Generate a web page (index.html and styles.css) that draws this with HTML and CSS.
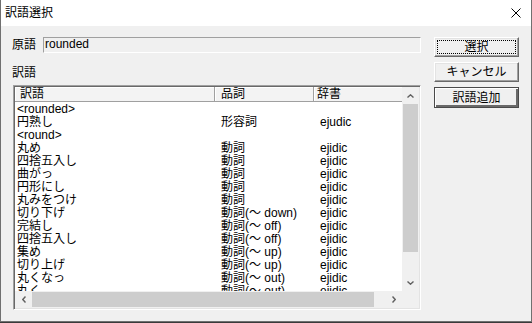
FILE: index.html
```html
<!DOCTYPE html>
<html>
<head>
    <meta charset="utf-8">
    <link rel="stylesheet" href="styles.css">
</head>
<body>
    <div class="window">
        <div class="titlebar">
            <span class="title">訳語選択</span>
            <svg class="close" width="10" height="10" viewBox="0 0 10 10">
                <path d="M0.5 0.5 L9.5 9.5 M9.5 0.5 L0.5 9.5" stroke="#000" stroke-width="1" fill="none"/>
            </svg>
        </div>

        <div class="dialog">
            <div class="main">
                <div class="src-row">
                    <span class="src-label">原語</span>
                    <div class="src-field">rounded</div>
                </div>

                <div class="list-label">訳語</div>

                <div class="list">
                    <div class="view">
                        <div class="header">
                            <div class="hcell c1">訳語</div>
                            <div class="hcell c2">品詞</div>
                            <div class="hcell c3">辞書</div>
                        </div>
                        <div class="rows">
                            <div class="row"><span class="c1">&lt;rounded&gt;</span><span class="c2"></span><span class="c3"></span></div>
                            <div class="row"><span class="c1">円熟し</span><span class="c2">形容詞</span><span class="c3">ejudic</span></div>
                            <div class="row"><span class="c1">&lt;round&gt;</span><span class="c2"></span><span class="c3"></span></div>
                            <div class="row"><span class="c1">丸め</span><span class="c2">動詞</span><span class="c3">ejidic</span></div>
                            <div class="row"><span class="c1">四捨五入し</span><span class="c2">動詞</span><span class="c3">ejidic</span></div>
                            <div class="row"><span class="c1">曲がっ</span><span class="c2">動詞</span><span class="c3">ejidic</span></div>
                            <div class="row"><span class="c1">円形にし</span><span class="c2">動詞</span><span class="c3">ejidic</span></div>
                            <div class="row"><span class="c1">丸みをつけ</span><span class="c2">動詞</span><span class="c3">ejidic</span></div>
                            <div class="row"><span class="c1">切り下げ</span><span class="c2">動詞(～ down)</span><span class="c3">ejidic</span></div>
                            <div class="row"><span class="c1">完結し</span><span class="c2">動詞(～ off)</span><span class="c3">ejidic</span></div>
                            <div class="row"><span class="c1">四捨五入し</span><span class="c2">動詞(～ off)</span><span class="c3">ejidic</span></div>
                            <div class="row"><span class="c1">集め</span><span class="c2">動詞(～ up)</span><span class="c3">ejidic</span></div>
                            <div class="row"><span class="c1">切り上げ</span><span class="c2">動詞(～ up)</span><span class="c3">ejidic</span></div>
                            <div class="row"><span class="c1">丸くなっ</span><span class="c2">動詞(～ out)</span><span class="c3">ejidic</span></div>
                            <div class="row"><span class="c1">丸く</span><span class="c2">動詞(～ out)</span><span class="c3">ejidic</span></div>
                        </div>
                    </div>

                    <div class="vscroll">
                        <div class="arrow">
                            <svg width="7" height="4" viewBox="0 0 7 4"><path d="M0.5 3.5 L3.5 0.8 L6.5 3.5" stroke="#606060" stroke-width="1.4" fill="none"/></svg>
                        </div>
                        <div class="vtrack"><div class="vthumb"></div></div>
                        <div class="arrow">
                            <svg width="7" height="4" viewBox="0 0 7 4"><path d="M0.5 0.5 L3.5 3.2 L6.5 0.5" stroke="#606060" stroke-width="1.4" fill="none"/></svg>
                        </div>
                    </div>

                    <div class="hscroll">
                        <div class="arrow">
                            <svg width="4" height="7" viewBox="0 0 4 7"><path d="M3.5 0.5 L0.8 3.5 L3.5 6.5" stroke="#606060" stroke-width="1.4" fill="none"/></svg>
                        </div>
                        <div class="htrack"><div class="hthumb"></div></div>
                        <div class="arrow">
                            <svg width="4" height="7" viewBox="0 0 4 7"><path d="M0.5 0.5 L3.2 3.5 L0.5 6.5" stroke="#606060" stroke-width="1.4" fill="none"/></svg>
                        </div>
                    </div>

                    <div class="corner"></div>
                </div>
            </div>

            <div class="buttons">
                <button class="btn focused"><span>選択</span></button>
                <button class="btn">キャンセル</button>
                <button class="btn default">訳語追加</button>
            </div>
        </div>
    </div>
</body>
</html>
```

FILE: styles.css
```css
body {
    margin: 0;
    padding: 0;
    background: #3a3a3a;
    font-family: "Liberation Sans", "Noto Sans CJK JP", sans-serif;
    font-size: 12px;
    color: #000;
    overflow: hidden;
}

.window {
    width: 532px;
    height: 322px;
    box-sizing: border-box;
    border: 1px solid #707070;
    border-top: none;
    background: #f0f0f0;
    display: flex;
    flex-direction: column;
}

.titlebar {
    height: 26px;
    background: #fff;
    display: flex;
    align-items: center;
    justify-content: space-between;
    padding: 0 10px 0 4px;
}

.title {
    font-size: 12px;
    line-height: 14px;
}

.close {
    display: block;
    margin-top: -1px;
}

.dialog {
    flex: 1;
    display: flex;
    padding: 11px 0 0 11px;
}

.main {
    width: 409px;
    display: flex;
    flex-direction: column;
}

.src-row {
    display: flex;
    align-items: center;
    height: 16px;
}

.src-label {
    width: 31px;
    line-height: 14px;
}

.src-field {
    flex: 1;
    height: 16px;
    box-sizing: border-box;
    border: 1px solid;
    border-color: #a0a0a0 #fff #fff #a0a0a0;
    padding-left: 1px;
    line-height: 13px;
}

.list-label {
    margin-top: 13px;
    line-height: 14px;
    height: 14px;
}

.list {
    margin: 5px 0 0 1px;
    width: 408px;
    height: 225px;
    box-sizing: border-box;
    border: 1px solid;
    border-color: #a0a0a0 #fff #fff #a0a0a0;
    box-shadow: inset 1px 1px 0 #696969, inset -1px -1px 0 #e3e3e3;
    padding: 1px;
    display: grid;
    grid-template-columns: 1fr 17px;
    grid-template-rows: 1fr 17px;
}

.view {
    background: #fff;
    overflow: hidden;
}

.header {
    display: flex;
    height: 15px;
    background: #f3f3f3;
}

.hcell {
    box-sizing: border-box;
    height: 15px;
    line-height: 14px;
    border-right: 1px solid #a0a0a0;
    box-shadow: inset 1px 1px 0 #fff;
    border-bottom: 1px solid #a0a0a0;
    white-space: nowrap;
}

.hcell.c1 { width: 200px; padding-left: 5px; }
.hcell.c2 { width: 99px; padding-left: 6px; }
.hcell.c3 { width: 88px; padding-left: 3px; border-right: none; }

.rows {
    padding-top: 1px;
}

.row {
    display: flex;
    height: 13px;
    line-height: 13px;
    white-space: nowrap;
}

.row .c1 { width: 200px; padding-left: 2px; box-sizing: border-box; }
.row .c2 { width: 99px; padding-left: 6px; box-sizing: border-box; }
.row .c3 { padding-left: 6px; }

.vscroll {
    background: #f0f0f0;
    display: flex;
    flex-direction: column;
}

.vscroll .arrow {
    height: 17px;
    display: flex;
    align-items: center;
    justify-content: center;
}

.vtrack {
    flex: 1;
    padding: 0 1px;
}

.vthumb {
    height: 148px;
    background: #cdcdcd;
}

.hscroll {
    background: #f0f0f0;
    display: flex;
}

.hscroll .arrow {
    width: 17px;
    display: flex;
    align-items: center;
    justify-content: center;
}

.htrack {
    flex: 1;
    padding: 1px 0;
}

.hthumb {
    width: 342px;
    height: 100%;
    background: #cdcdcd;
}

.corner {
    background: #f0f0f0;
}

.buttons {
    margin: 0 0 0 13px;
    display: flex;
    flex-direction: column;
    gap: 5px;
}

.btn {
    width: 85px;
    height: 20px;
    margin: 0;
    padding: 0;
    font-family: inherit;
    font-size: 12px;
    line-height: 14px;
    color: #000;
    background: #f0f0f0;
    border: 1px solid;
    border-color: #fff #696969 #696969 #fff;
    box-shadow: inset -1px -1px 0 #a0a0a0, inset 1px 1px 0 #e3e3e3;
}

.btn.focused span {
    display: block;
    margin: 2px;
    height: 12px;
    line-height: 12px;
    border: 1px dotted #000;
}

.btn.default {
    height: 21px;
    border: 1px solid #4a4a4a;
    box-shadow: inset 1px 1px 0 #fff, inset -2px -2px 0 #696969;
}
```
